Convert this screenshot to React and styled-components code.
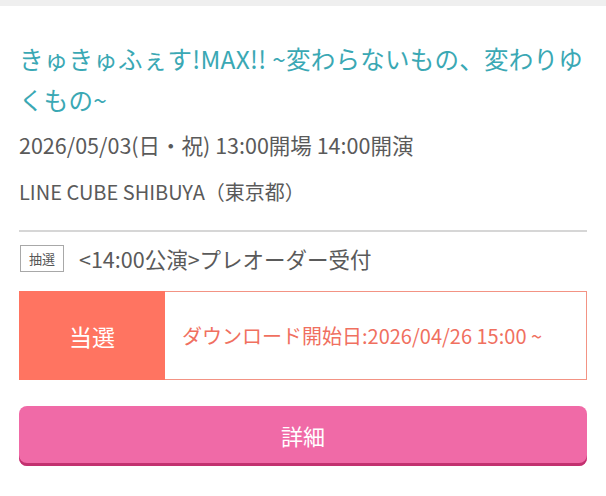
import React from "react";
import styled, { createGlobalStyle } from "styled-components";

const Global = createGlobalStyle`
  html, body { margin: 0; padding: 0; background: #ffffff; }
  body { font-family: "Noto Sans CJK JP", "Noto Sans", sans-serif; }
  * { box-sizing: border-box; }
`;

const TopBar = styled.div`
  height: 6px;
  background: #efefef;
`;

const Card = styled.section`
  padding: 32px 19px 0 19px;
  display: flex;
  flex-direction: column;
`;

const Title = styled.h1`
  margin: 0;
  font-size: 24.5px;
  letter-spacing: 0.25px;
  line-height: 41px;
  font-weight: 400;
  color: #3aa8b4;
`;

const Info = styled.p`
  margin: ${(p) => p.$mt}px 0 0 0;
  font-size: ${(p) => p.$size}px;
  line-height: 28px;
  color: #5a5a5a;
  white-space: nowrap;
`;

const Divider = styled.hr`
  margin: 24px 0 0 0;
  border: none;
  height: 2px;
  background: #d6d6d6;
`;

const SaleRow = styled.div`
  margin-top: 13px;
  display: flex;
  align-items: center;
  gap: 15px;
  height: 27px;
`;

const Badge = styled.span`
  display: inline-flex;
  align-items: center;
  justify-content: center;
  width: 44px;
  height: 27px;
  border: 1px solid #a8a8a8;
  font-size: 13px;
  color: #555;
  margin-left: 1px;
`;

const SaleName = styled.span`
  font-size: 21.5px;
  line-height: 27px;
  color: #5a5a5a;
  white-space: nowrap;
`;

const Result = styled.div`
  margin-top: 19px;
  display: flex;
  height: 89px;
  border: 1px solid #f39384;
`;

const Status = styled.div`
  width: 146px;
  margin: -1px 0 -1px -1px;
  background: #ff7461;
  color: #fff;
  font-size: 23px;
  display: flex;
  align-items: center;
  justify-content: center;
`;

const ResultText = styled.div`
  flex: 1;
  display: flex;
  align-items: center;
  padding-left: 17px;
  font-size: 20px;
  color: #f0705f;
  white-space: nowrap;
`;

const DetailButton = styled.button`
  margin-top: 26px;
  height: 60px;
  border: none;
  border-radius: 8px;
  background: #f06aa7;
  box-shadow: inset 0 -3px 0 #c2316f;
  color: #fff;
  font-family: inherit;
  font-size: 22px;
  padding: 0 0 3px 0;
`;

export default function App() {
  return (
    <>
      <Global />
      <TopBar />
      <Card>
        <Title>きゅきゅふぇす!MAX!! ~変わらないもの、変わりゆくもの~</Title>
        <Info $mt={11} $size={21.5}>2026/05/03(日・祝) 13:00開場 14:00開演</Info>
        <Info $mt={19} $size={20}>LINE CUBE SHIBUYA（東京都）</Info>
        <Divider />
        <SaleRow>
          <Badge>抽選</Badge>
          <SaleName>&lt;14:00公演&gt;プレオーダー受付</SaleName>
        </SaleRow>
        <Result>
          <Status>当選</Status>
          <ResultText>ダウンロード開始日:2026/04/26 15:00 ~</ResultText>
        </Result>
        <DetailButton>詳細</DetailButton>
      </Card>
    </>
  );
}
